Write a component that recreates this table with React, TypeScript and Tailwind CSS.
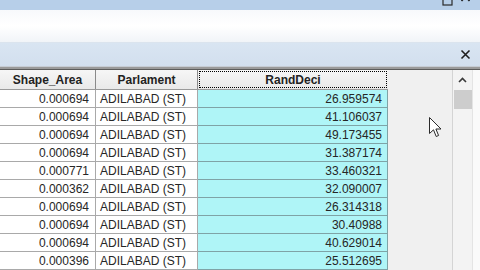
import React from "react";

const rows = [
  { area: "0.000694", parl: "ADILABAD (ST)", rand: "26.959574" },
  { area: "0.000694", parl: "ADILABAD (ST)", rand: "41.106037" },
  { area: "0.000694", parl: "ADILABAD (ST)", rand: "49.173455" },
  { area: "0.000694", parl: "ADILABAD (ST)", rand: "31.387174" },
  { area: "0.000771", parl: "ADILABAD (ST)", rand: "33.460321" },
  { area: "0.000362", parl: "ADILABAD (ST)", rand: "32.090007" },
  { area: "0.000694", parl: "ADILABAD (ST)", rand: "26.314318" },
  { area: "0.000694", parl: "ADILABAD (ST)", rand: "30.40988" },
  { area: "0.000694", parl: "ADILABAD (ST)", rand: "40.629014" },
  { area: "0.000396", parl: "ADILABAD (ST)", rand: "25.512695" },
];

function CloseX({ size = 11 }: { size?: number }) {
  return (
    <svg width={size} height={size} viewBox="0 0 11 11">
      <path d="M1.5 1.5 L9.5 9.5 M9.5 1.5 L1.5 9.5" stroke="#1e1e1e" strokeWidth="1.6" />
    </svg>
  );
}

export default function App() {
  return (
    <div
      className="w-[480px] h-[270px] overflow-hidden relative flex flex-col bg-[#f0f0f0] text-[#262626]"
      style={{ fontFamily: '"Liberation Sans", Arial, sans-serif' }}
    >
      {/* window caption, mostly scrolled off */}
      <div className="h-[10px] shrink-0 bg-[#b7cfe9] overflow-hidden flex items-end justify-end gap-[7px] pr-[9px]">
        <svg width="11" height="16" viewBox="0 0 11 16" className="shrink-0">
          <rect x="1" y="1" width="9" height="10" fill="none" stroke="#2a2a2a" strokeWidth="1.2" />
        </svg>
        <svg width="11" height="16" viewBox="0 0 11 16" className="shrink-0">
          <path d="M1.5 -2 L9.5 7 M9.5 -2 L1.5 7" stroke="#1e1e1e" strokeWidth="1.6" />
        </svg>
      </div>

      {/* toolbar strip */}
      <div className="h-[33px] shrink-0 bg-gradient-to-b from-[#f7f9fc] via-white to-[#f1f4f8] border-b border-[#dbe4ee]" />

      {/* table window title */}
      <div className="h-[23px] shrink-0 bg-gradient-to-b from-[#d9e5f2] to-[#d2dfee] flex items-center justify-end pr-[9px]">
        <CloseX />
      </div>

      <div className="h-[1px] shrink-0 bg-[#c6ccd4]" />
      <div className="h-[2px] shrink-0 bg-[#9a9a9a]" />
      <div className="h-[1px] shrink-0 bg-[#5c5c5c]" />

      <div className="flex flex-1 min-h-0">
        {/* attribute grid */}
        <div className="w-[388px] shrink-0 flex flex-col text-[12px]">
          <div className="h-[20px] shrink-0 flex font-bold text-[#222] bg-gradient-to-b from-[#f6f6f6] to-[#e9e9e9] border-b border-[#9a9a9a]">
            <div className="w-[96px] border-r border-[#8a8a8a] flex items-center justify-center">
              Shape_Area
            </div>
            <div className="w-[102px] border-r border-[#8a8a8a] flex items-center justify-center">
              Parlament
            </div>
            <div className="flex-1 flex p-[1px]">
              <div className="flex-1 border border-dotted border-black flex items-center justify-center">
                RandDeci
              </div>
            </div>
          </div>

          {rows.map((r, i) => (
            <div key={i} className="h-[18px] shrink-0 flex">
              <div className="w-[96px] bg-white border-r border-b border-[#a9a9a9] flex items-center justify-end pr-[6px]">
                {r.area}
              </div>
              <div className="w-[102px] bg-white border-r border-b border-[#a9a9a9] flex items-center pl-[4px]">
                {r.parl}
              </div>
              <div className="flex-1 bg-[#aff5f7] border-b border-r border-[#7fa3a6] flex items-center justify-end pr-[5px]">
                {r.rand}
              </div>
            </div>
          ))}
        </div>

        {/* empty space right of the columns */}
        <div className="flex-1 bg-[#f0f0f0]" />

        {/* vertical scrollbar */}
        <div className="w-[20px] shrink-0 bg-[#f3f3f3] border-l border-[#d4d4d4] flex flex-col items-center">
          <div className="h-[20px] flex items-center justify-center">
            <svg width="9" height="6" viewBox="0 0 9 6">
              <path d="M1 5 L4.5 1.5 L8 5" fill="none" stroke="#3a3a3a" strokeWidth="1.6" />
            </svg>
          </div>
          <div className="w-[18px] h-[19px] bg-[#cdcdcd]" />
        </div>

        <div className="w-[8px] shrink-0 bg-[#fafafa] border-l border-[#e4e4e4]" />
      </div>

      {/* mouse pointer */}
      <svg
        width="13"
        height="21"
        viewBox="0 0 13 21"
        className="absolute left-[429px] top-[117px]"
      >
        <path
          d="M0.5 0.5 L0.5 16.5 L4.5 12.8 L7.2 19.5 L9.6 18.5 L6.9 12 L12 12 Z"
          fill="white"
          stroke="#2a2a2a"
          strokeWidth="1"
          strokeLinejoin="round"
        />
      </svg>
    </div>
  );
}
